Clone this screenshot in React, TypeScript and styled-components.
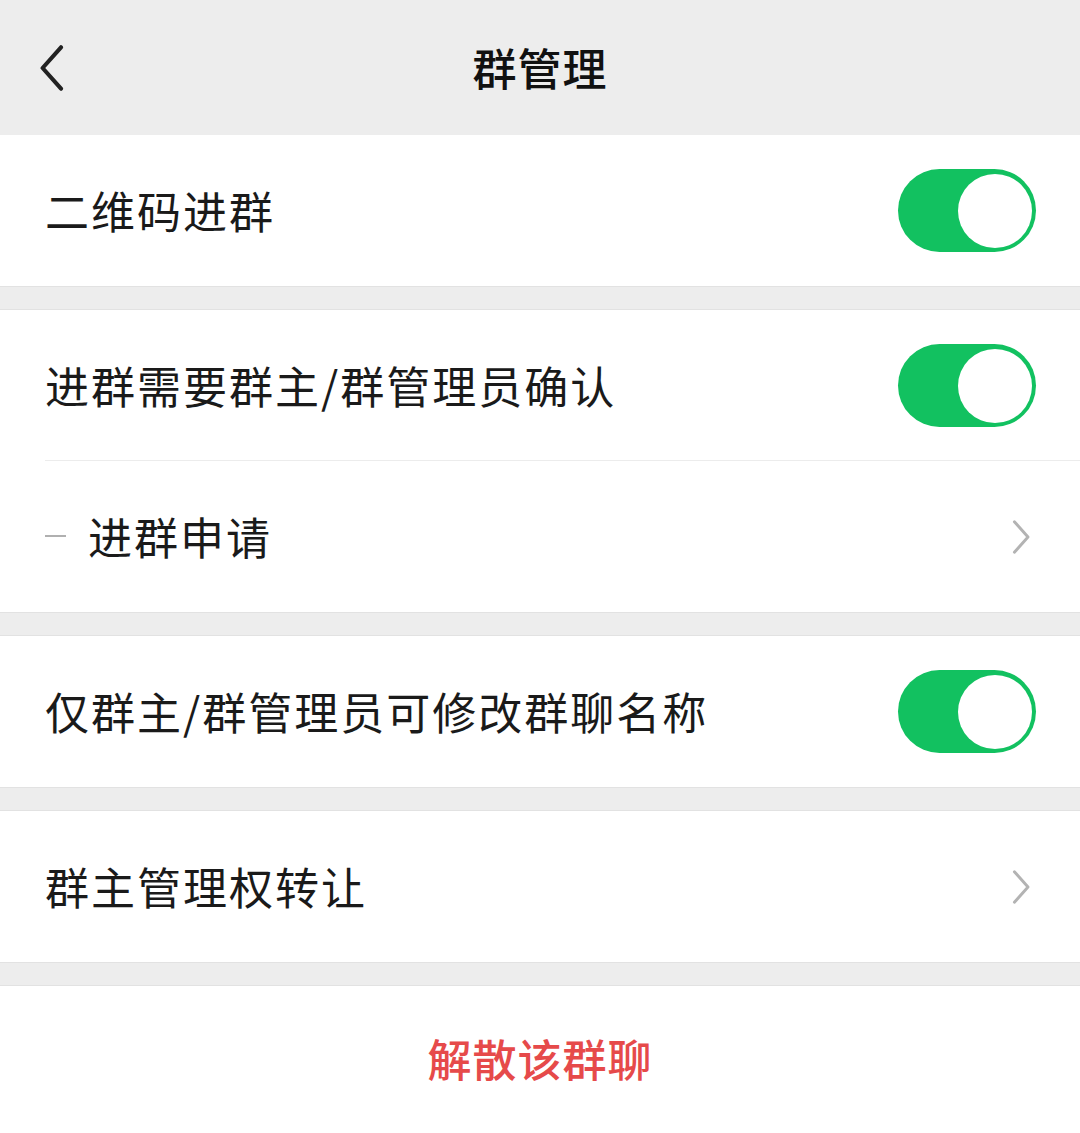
import styled, { createGlobalStyle } from "styled-components";

const GlobalStyle = createGlobalStyle`
  html, body {
    margin: 0;
    padding: 0;
    background: #ededed;
  }
  body {
    font-family: "Noto Sans CJK SC", "Noto Sans", sans-serif;
    color: #1a1a1a;
  }
`;

// 페이지
const Page = styled.div`
  width: 1080px;
  min-height: 1133px;
  background: #ededed;
  display: flex;
  flex-direction: column;
`;

const Header = styled.header`
  height: 135px;
  display: grid;
  grid-template-columns: 120px 1fr 120px;
  align-items: center;
  background: #ededed;
`;

const BackButton = styled.button`
  border: none;
  background: none;
  padding: 0 0 0 38px;
  height: 100%;
  display: flex;
  align-items: center;
  cursor: pointer;
`;

const Title = styled.h1`
  margin: 0;
  text-align: center;
  font-size: 44px;
  font-weight: 500;
  letter-spacing: 1px;
  color: #111;
  padding-bottom: 2px;
`;

const Section = styled.section<{ $gap?: boolean }>`
  background: #fff;
  margin-top: ${(p) => (p.$gap ? "22px" : "0")};
  border-top: ${(p) => (p.$gap ? "1px solid #e2e2e2" : "none")};
  border-bottom: 1px solid #e2e2e2;
  display: flex;
  flex-direction: column;
`;

const Row = styled.div<{ $divider?: boolean }>`
  height: 151px;
  display: flex;
  align-items: center;
  justify-content: space-between;
  padding: 0 44px 0 45px;
  box-sizing: border-box;
  position: relative;
  &::after {
    content: "";
    display: ${(p) => (p.$divider ? "block" : "none")};
    position: absolute;
    left: 45px;
    right: 0;
    bottom: 0;
    height: 1px;
    background: #ececec;
  }
`;

const Label = styled.span`
  font-size: 44px;
  letter-spacing: 2px;
  color: #1a1a1a;
  display: flex;
  align-items: center;
  padding-bottom: 2px;
`;

const Dash = styled.i`
  display: inline-block;
  width: 21px;
  height: 2px;
  background: #b0b0b0;
  margin-right: 22px;
`;

const Switch = styled.div<{ $on: boolean }>`
  width: 138px;
  height: 83px;
  border-radius: 42px;
  background: ${(p) => (p.$on ? "#12c160" : "#e5e5e5")};
  display: flex;
  align-items: center;
  justify-content: ${(p) => (p.$on ? "flex-end" : "flex-start")};
  padding: 0 4px;
  box-sizing: border-box;
`;

const Knob = styled.span`
  width: 74px;
  height: 74px;
  border-radius: 50%;
  background: #fff;
`;

const Arrow = styled.span`
  display: flex;
  align-items: center;
  margin-right: 5px;
`;

const Danger = styled.div`
  flex: 1;
  background: #fff;
  margin-top: 22px;
  border-top: 1px solid #e2e2e2;
  display: flex;
  justify-content: center;
  padding-top: 40px;
  font-size: 44px;
  letter-spacing: 1px;
  color: #e64a4a;
  font-weight: 500;
`;

const Chevron = ({ dir, color, size }: { dir: "left" | "right"; color: string; size: number }) => (
  <svg width={size * 0.6} height={size} viewBox="0 0 24 40" fill="none">
    <path
      d={dir === "left" ? "M20 2 L4 20 L20 38" : "M4 2 L20 20 L4 38"}
      stroke={color}
      strokeWidth={dir === "left" ? 3.6 : 3.4}
      strokeLinecap="round"
      strokeLinejoin="round"
    />
  </svg>
);

const Toggle = ({ on }: { on: boolean }) => (
  <Switch $on={on}>
    <Knob />
  </Switch>
);

const More = () => (
  <Arrow>
    <Chevron dir="right" color="#b3b3b3" size={34} />
  </Arrow>
);

export default function App() {
  return (
    <>
      <GlobalStyle />
      <Page>
        <Header>
          <BackButton>
            <Chevron dir="left" color="#222" size={46} />
          </BackButton>
          <Title>群管理</Title>
          <div />
        </Header>

        <Section>
          <Row>
            <Label>二维码进群</Label>
            <Toggle on />
          </Row>
        </Section>

        <Section $gap>
          <Row $divider>
            <Label>进群需要群主/群管理员确认</Label>
            <Toggle on />
          </Row>
          <Row>
            <Label>
              <Dash />
              进群申请
            </Label>
            <More />
          </Row>
        </Section>

        <Section $gap>
          <Row>
            <Label>仅群主/群管理员可修改群聊名称</Label>
            <Toggle on />
          </Row>
        </Section>

        <Section $gap>
          <Row>
            <Label>群主管理权转让</Label>
            <More />
          </Row>
        </Section>

        <Danger>解散该群聊</Danger>
      </Page>
    </>
  );
}
